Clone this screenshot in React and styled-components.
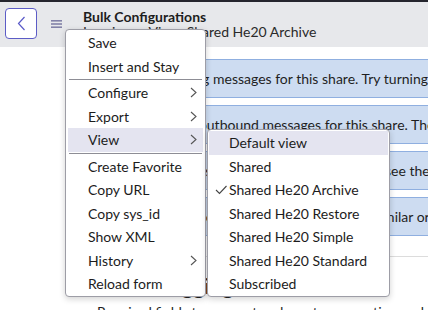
import React from "react";
import styled, { createGlobalStyle } from "styled-components";

const GlobalStyle = createGlobalStyle`
  html, body { margin: 0; padding: 0; background: #fff; }
  body { font-family: Lato, "Open Sans", "Liberation Sans", sans-serif; overflow: hidden; }
`;

const Page = styled.div`
  position: relative;
  width: 428px;
  height: 310px;
  overflow: hidden;
  background: #fff;
  color: #1f1f1f;
`;

const TopStrip = styled.div`
  height: 2px;
  background: #25252e;
`;

const Header = styled.header`
  height: 45px;
  box-sizing: border-box;
  background: #e7e8eb;
  display: flex;
  align-items: flex-start;
  padding: 6px 0 0 5px;
`;

const BackButton = styled.button`
  width: 32px;
  height: 31px;
  box-sizing: border-box;
  border: 1px solid #5c5cc6;
  border-radius: 4px;
  background: #fff;
  display: flex;
  align-items: center;
  justify-content: center;
  padding: 0;
`;

const Hamburger = styled.div`
  margin: 12px 0 0 14px;
  width: 11px;
  height: 8px;
  display: flex;
`;

const TitleBlock = styled.div`
  margin: 1px 0 0 21px;
  display: flex;
  flex-direction: column;
  white-space: nowrap;
`;

const Title = styled.div`
  font-size: 14px;
  font-weight: 700;
  line-height: 16px;
  color: #1d1d1d;
`;

const Subtitle = styled.div`
  font-size: 14px;
  line-height: 14px;
  color: #2a2a2a;
`;

const Content = styled.main`
  padding: 12px 0 0 72px;
`;

const Rows = styled.div`
  display: flex;
  flex-direction: column;
  gap: 7px;
  width: 460px;
`;

const MessageRow = styled.div`
  height: 39px;
  box-sizing: border-box;
  background: #cddcf1;
  border-top: 1px solid #8fafe0;
  border-bottom: 1px solid #8fafe0;
  padding-left: 12px;
  font-size: 14px;
  line-height: 37px;
  white-space: nowrap;
  overflow: hidden;
  color: #1f1f1f;
`;

const Divider = styled.div`
  margin: 20px 0 0 0;
  height: 1px;
  background: #dcdcdc;
  width: 460px;
`;

const SectionTitle = styled.h2`
  margin: 15px 0 0 8px;
  font-size: 22px;
  font-weight: 400;
  line-height: 28px;
  white-space: nowrap;
  color: #1f1f1f;
`;

const SectionText = styled.p`
  margin: 3px 0 0 25px;
  font-size: 14px;
  line-height: 18px;
  white-space: nowrap;
  color: #1f1f1f;
`;

const Menu = styled.div`
  position: absolute;
  left: ${(p) => p.$left}px;
  top: ${(p) => p.$top}px;
  width: ${(p) => p.$width}px;
  box-sizing: border-box;
  background: #fff;
  border: 1px solid #9d9da6;
  border-radius: 4px;
  box-shadow: 0 2px 6px rgba(0, 0, 0, 0.18);
  padding: 1px 0 0.5px 0;
  display: flex;
  flex-direction: column;
`;

const MenuItem = styled.div`
  height: 23.5px;
  margin: 0 ${(p) => p.$inset}px;
  padding: 0 ${(p) => p.$padRight}px 0 ${(p) => p.$padLeft}px;
  display: flex;
  align-items: center;
  justify-content: space-between;
  font-size: 14px;
  color: #1c1c1c;
  white-space: nowrap;
  background: ${(p) => (p.$active ? "#e4e4f0" : "transparent")};
`;

const Label = styled.span`
  display: flex;
  align-items: center;
`;

const CheckSlot = styled.span`
  width: 14px;
  display: inline-flex;
  align-items: center;
`;

const Separator = styled.div`
  height: 1px;
  margin: 1px 3px;
  background: #8d8d95;
`;

const Chevron = () => (
  <svg width="7" height="11" viewBox="0 0 7 11">
    <polyline points="1,1 6,5.5 1,10" fill="none" stroke="#555" strokeWidth="1.1" />
  </svg>
);

const Check = () => (
  <svg width="12" height="10" viewBox="0 0 12 10">
    <polyline points="1,5 4.5,8.5 11.5,1" fill="none" stroke="#444" strokeWidth="1.1" />
  </svg>
);

const mainItems = [
  { label: "Save" },
  { label: "Insert and Stay" },
  { sep: true },
  { label: "Configure", sub: true },
  { label: "Export", sub: true },
  { label: "View", sub: true, active: true },
  { sep: true },
  { label: "Create Favorite" },
  { label: "Copy URL" },
  { label: "Copy sys_id" },
  { label: "Show XML" },
  { label: "History", sub: true },
  { label: "Reload form" },
];

const viewItems = [
  { label: "Default view", active: true },
  { label: "Shared" },
  { label: "Shared He20 Archive", checked: true },
  { label: "Shared He20 Restore" },
  { label: "Shared He20 Simple" },
  { label: "Shared He20 Standard" },
  { label: "Subscribed" },
];

const rows = [
  "There are no logging messages for this share. Try turning on logging.",
  "There were yet no outbound messages for this share. They will appear here.",
  "To change how this share behaves or runs please see the documentation.",
  "Shares in this instance that are configured with similar or overlapping scopes are merged.",
];

export default function App() {
  return (
    <Page>
      <GlobalStyle />
      <TopStrip />
      <Header>
        <BackButton aria-label="Back">
          <svg width="9" height="15" viewBox="0 0 9 15">
            <polyline points="7.5,1 1.5,7.5 7.5,14" fill="none" stroke="#5a5ac8" strokeWidth="1.2" />
          </svg>
        </BackButton>
        <Hamburger>
          <svg width="11" height="8" viewBox="0 0 11 8">
            <rect x="0" y="0" width="11" height="1.6" fill="#8282a8" />
            <rect x="0" y="3.2" width="11" height="1.6" fill="#8282a8" />
            <rect x="0" y="6.4" width="11" height="1.6" fill="#8282a8" />
          </svg>
        </Hamburger>
        <TitleBlock>
          <Title>Bulk Configurations</Title>
          <Subtitle>Loggings - View: Shared He20 Archive</Subtitle>
        </TitleBlock>
      </Header>
      <Content>
        <Rows>
          {rows.map((text, i) => (
            <MessageRow key={i}>{text}</MessageRow>
          ))}
        </Rows>
        <Divider />
        <SectionTitle>Archive Logging</SectionTitle>
        <SectionText>Required fields to connect and create connections, which are needed</SectionText>
      </Content>

      <Menu $left={65} $top={29} $width={141}>
        {mainItems.map((it, i) =>
          it.sep ? (
            <Separator key={i} />
          ) : (
            <MenuItem key={i} $inset={2} $padLeft={20} $padRight={6} $active={it.active}>
              <Label>{it.label}</Label>
              {it.sub && <Chevron />}
            </MenuItem>
          )
        )}
      </Menu>

      <Menu $left={207} $top={129} $width={183}>
        {viewItems.map((it, i) => (
          <MenuItem key={i} $inset={1} $padLeft={6} $padRight={6} $active={it.active}>
            <Label>
              <CheckSlot>{it.checked && <Check />}</CheckSlot>
              {it.label}
            </Label>
          </MenuItem>
        ))}
      </Menu>
    </Page>
  );
}
